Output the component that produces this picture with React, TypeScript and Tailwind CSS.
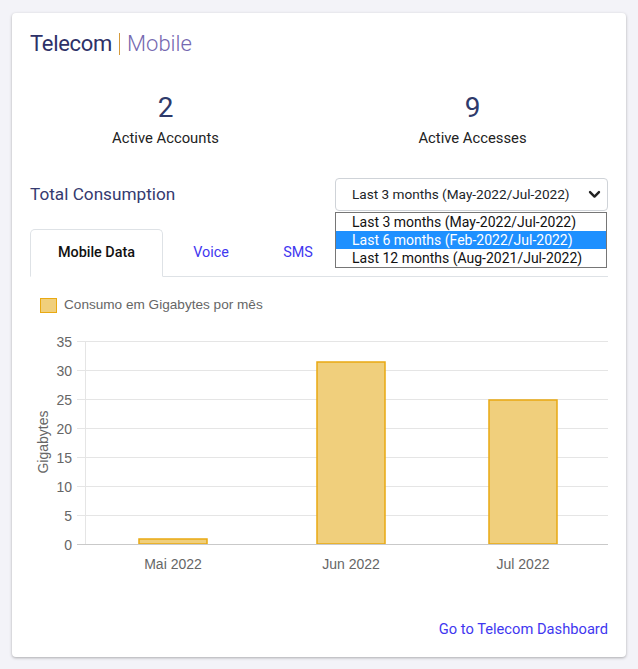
export default function App() {
  const ticks = [35, 30, 25, 20, 15, 10, 5, 0];
  const bars = [
    { label: "Mai 2022", x: 109, top: 219, cx: 143 },
    { label: "Jun 2022", x: 287, top: 42, cx: 321 },
    { label: "Jul 2022", x: 459, top: 80, cx: 493 },
  ];
  return (
    <div className="min-h-[669px] bg-[#f3f3f8] pt-[13px] pl-[12px] font-['Roboto',sans-serif]">
      <div className="relative w-[614px] h-[644px] bg-white rounded-[4px] shadow-[0_1px_3px_rgba(0,0,0,0.3)]">
        {/* Title */}
        <div className="px-[18px] pt-[17px]">
          <div className="flex items-center h-[28px] text-[22px] leading-[28px]">
            <span className="text-[#2e3168] tracking-[-0.3px]">Telecom</span>
            <span className="mx-[7px] w-px h-[22px] bg-[#d49a3c]" />
            <span className="text-[#7568b0] font-light">Mobile</span>
          </div>
        </div>

        {/* Stats */}
        <div className="grid grid-cols-2 mt-[33px]">
          <div className="flex flex-col items-center">
            <div className="text-[28px] leading-[34px] text-[#2e3a6b]">2</div>
            <div className="mt-[3px] text-[14.8px] leading-[20px] text-[#222]">Active Accounts</div>
          </div>
          <div className="flex flex-col items-center">
            <div className="text-[28px] leading-[34px] text-[#2e3a6b]">9</div>
            <div className="mt-[3px] text-[14.8px] leading-[20px] text-[#222]">Active Accesses</div>
          </div>
        </div>

        {/* Total consumption */}
        <div className="px-[18px] mt-[30px] flex items-center justify-between h-[33px]">
          <div className="text-[17.2px] text-[#353a70]">Total Consumption</div>
          <div className="relative w-[273px] h-[33px]">
            <div className="w-full h-full border border-[#cfd3d8] rounded-[4px] flex items-center pl-[16px] pr-[4px] text-[13.6px] text-[#212529]">
              <span className="flex-1">Last 3 months (May-2022/Jul-2022)</span>
              <svg width="13" height="13" viewBox="0 0 16 16" className="mr-[2px]">
                <path d="M2.5 5 L8 10.5 L13.5 5" fill="none" stroke="#222" strokeWidth="3" strokeLinecap="round" strokeLinejoin="round" />
              </svg>
            </div>
            <div className="absolute left-0 top-[34px] w-[272px] border border-[#767676] bg-white text-[14px] text-[#111] z-10">
              <div className="h-[18px] leading-[18px] pl-[16px]">Last 3 months (May-2022/Jul-2022)</div>
              <div className="h-[18px] leading-[18px] pl-[16px] bg-[#1e90ff] text-white">Last 6 months (Feb-2022/Jul-2022)</div>
              <div className="h-[18px] leading-[18px] pl-[16px]">Last 12 months (Aug-2021/Jul-2022)</div>
            </div>
          </div>
        </div>

        {/* Tabs */}
        <div className="px-[18px] mt-[18px]">
          <div className="flex h-[48px] border-b border-[#dee2e6]">
            <div className="w-[133px] -mb-px border border-[#dee2e6] border-b-white bg-white rounded-t-[5px] flex items-center justify-center text-[14.4px] font-medium text-[#111]">
              Mobile Data
            </div>
            <div className="w-[96px] flex items-center justify-center text-[14.4px] text-[#3f37f0]">Voice</div>
            <div className="w-[78px] flex items-center justify-center text-[14.4px] text-[#3f37f0]">SMS</div>
          </div>
        </div>

        {/* Legend */}
        <div className="px-[18px] mt-[21px] flex items-center h-[15px] font-['Liberation_Sans',Arial,sans-serif]">
          <div className="ml-[10px] w-[17px] h-[15px] bg-[#f0cf7c] border-[1.5px] border-[#e9a912]" />
          <div className="ml-[7px] text-[13.6px] text-[#666]">Consumo em Gigabytes por mês</div>
        </div>

        {/* Chart */}
        <div className="px-[18px] mt-[7px]">
          <svg width="578" height="260" className="block" fontFamily="'Liberation Sans', Arial, sans-serif" fontSize="14">
            {ticks.map((t, i) => {
              const y = 21 + 29 * i + 0.5;
              return (
                <g key={t}>
                  <line x1={47} x2={578} y1={y} y2={y} stroke={t === 0 ? "#c9c9c9" : "#e5e5e5"} strokeWidth="1" />
                  <text x={42} y={y} textAnchor="end" dominantBaseline="central" fill="#666">{t}</text>
                </g>
              );
            })}
            <line x1={55.5} x2={55.5} y1={21} y2={224} stroke="#e5e5e5" strokeWidth="1" />
            <text transform="translate(13 122) rotate(-90)" textAnchor="middle" dominantBaseline="central" fill="#666">Gigabytes</text>
            {bars.map((b) => (
              <g key={b.label}>
                <rect x={b.x} y={b.top} width={68} height={224 - b.top} fill="#f0cf7c" stroke="#e9a912" strokeWidth="1.5" />
                <text x={b.cx} y={244} textAnchor="middle" dominantBaseline="central" fill="#666">{b.label}</text>
              </g>
            ))}
            <line x1={55} x2={578} y1={224.5} y2={224.5} stroke="#c9c9c9" strokeWidth="1" />
          </svg>
        </div>

        {/* Link */}
        <div className="px-[18px] mt-[39px] flex justify-end">
          <a className="text-[14.7px] leading-[20px] text-[#3f37f0]" href="#">Go to Telecom Dashboard</a>
        </div>
      </div>
    </div>
  );
}
